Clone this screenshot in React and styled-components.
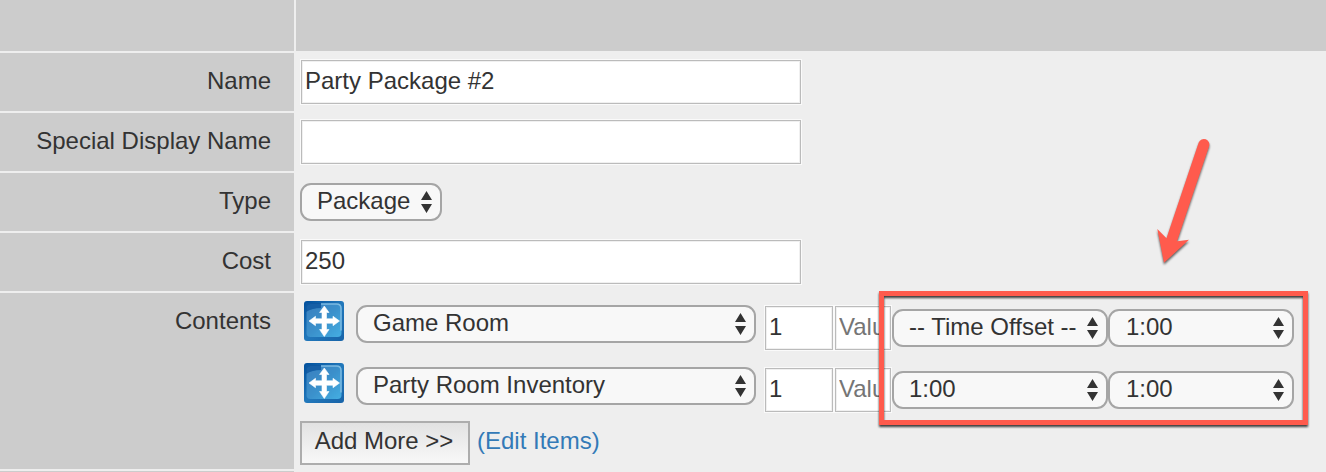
import React from 'react';
import styled, { createGlobalStyle } from 'styled-components';

const GlobalStyle = createGlobalStyle`
  * {
    box-sizing: border-box;
  }

  body {
    margin: 0;
    background: #eee;
    overflow: hidden;
  }

  body, input, select, button {
    font-family: 'Liberation Sans', Arial, sans-serif;
    font-size: 24px;
    line-height: 28px;
    color: #333;
  }
`;

const Page = styled.div`
  position: relative;
  width: 1326px;
  height: 472px;
  overflow: hidden;
`;

const Form = styled.div`
  display: grid;
  grid-template-columns: 294px 1fr;
  grid-template-rows: 51px repeat(4, 58px) 176px 58px;
  gap: 2px;
  background: #eee;
`;

const Heading = styled.div`
  background: #ccc;
`;

const Label = styled.div`
  padding: 14px 23px 0 0;
  background: #ccc;
  text-align: right;
`;

const Cell = styled.div`
  display: flex;
  align-items: flex-start;
  padding: ${({ $top }) => $top || 7}px 0 0 5px;
`;

const Input = styled.input`
  flex: none;
  width: ${({ $width }) => $width || 500}px;
  height: 44px;
  padding: 0 6px 2px 3px;
  border: 1px solid #bbb;
  border-radius: 0;
  outline: 1px solid #fafafa;
  background: #fff;
  box-shadow: inset 0 0 0 1px #f0f0f0;

  &::placeholder {
    color: #757575;
    opacity: 1;
  }
`;

const SelectBox = styled.div`
  display: flex;
  flex: none;
  align-items: center;
  width: ${({ $width }) => $width}px;
  height: 38px;
  padding-right: 8px;
  border: 2px solid #a5a5a5;
  border-radius: 11px;
  background: #f8f8f8;

  select {
    flex: 1;
    min-width: 0;
    height: 34px;
    padding: 0 0 2px 15px;
    border: 0;
    outline: 0;
    appearance: none;
    background: transparent;
  }

  svg {
    flex: none;
    fill: #333;
  }
`;

const TypeCell = styled(Cell)`
  padding: 10px 0 0 4px;
`;

const Contents = styled.div`
  display: flex;
  flex-direction: column;
  padding: 8px 0 0 4px;
`;

const Item = styled.div`
  display: flex;
  align-items: flex-start;
  height: 62px;
  padding-left: 4px;

  > svg {
    flex: none;
    margin-right: 12px;
  }
`;

const ItemSelect = styled.div`
  padding-top: 4px;
  margin-right: 9px;
`;

const ItemInputs = styled.div`
  display: flex;
  gap: 2px;
  padding-top: 5px;
  margin-right: 1px;
`;

const Times = styled.div`
  display: flex;
  padding-top: 8px;

  div + div select {
    padding-left: 16px;
  }
`;

const Actions = styled.div`
  display: flex;
  align-items: flex-start;
  gap: 7px;
  margin-top: -4px;

  a {
    padding-top: 6px;
    color: #337ab7;
    text-decoration: none;
  }
`;

const Button = styled.button`
  width: 170px;
  height: 44px;
  padding: 0 2px 4px 0;
  border: 2px solid #adadad;
  background: linear-gradient(#e2e2e2, #f8f8f8);
  white-space: nowrap;
`;

const Highlight = styled.div`
  position: absolute;
  top: 291px;
  left: 879px;
  width: 429px;
  height: 134px;
  border: 5px solid #ff5b4d;
  filter: drop-shadow(0 2px 1px rgba(0, 0, 0, 0.75));
  pointer-events: none;
`;

const Pointer = styled.svg`
  position: absolute;
  top: 130px;
  left: 1150px;
  filter: drop-shadow(0 2px 1px rgba(0, 0, 0, 0.6));
`;

function Select({ width, value }) {
  return (
    <SelectBox $width={width}>
      <select defaultValue={value}>
        <option>{value}</option>
      </select>
      <svg width="11" height="22" viewBox="0 0 11 22">
        <path d="M5.5 0 11 9H0ZM0 13h11L5.5 22Z" />
      </svg>
    </SelectBox>
  );
}

function MoveIcon({ id }) {
  return (
    <svg width="40" height="40" viewBox="0 0 40 40">
      <defs>
        <linearGradient id={`${id}-base`} x1="0" y1="0" x2="1" y2="1">
          <stop offset="0" stopColor="#004f9c" />
          <stop offset="0.5" stopColor="#2278bb" />
          <stop offset="1" stopColor="#1763a8" />
        </linearGradient>
        <linearGradient id={`${id}-face`} x1="0" y1="0" x2="1" y2="1">
          <stop offset="0" stopColor="#3a7fbe" />
          <stop offset="0.5" stopColor="#3a90cb" />
          <stop offset="1" stopColor="#45aee2" />
        </linearGradient>
        <filter id={`${id}-soft`}>
          <feGaussianBlur stdDeviation="0.6" />
        </filter>
      </defs>
      <rect width="40" height="40" rx="3" fill={`url(#${id}-base)`} />
      <g filter={`url(#${id}-soft)`}>
        <rect x="2.5" y="3" width="35" height="33" rx="4" fill={`url(#${id}-face)`} />
        <path d="M17 3h15.500q4.500 0 4.500 4.500v22" fill="none" stroke="#7dbbe2" strokeWidth="1.500" />
        <path d="M2 2h15v5Q8 7 2 11Z" fill="#0a559f" opacity="0.8" />
        <path
          d="M20.300 5 25 11.500h-2.500v6.300h6.500V15.300L35.500 20 29 24.700v-2.500h-6.500v6.300H25L20.300 35.500l-4.700-7H18v-6.300h-6.500v2.500L5 20l6.500-4.700v2.500H18v-6.300h-2.400Z"
          fill="#fff"
          stroke="#fff"
          strokeWidth="0.6"
        />
      </g>
    </svg>
  );
}

const items = [
  { id: 'game', name: 'Game Room', offset: '-- Time Offset --', duration: '1:00' },
  { id: 'party', name: 'Party Room Inventory', offset: '1:00', duration: '1:00' },
];

export default function App() {
  return (
    <Page>
      <GlobalStyle />
      <Form>
        <Heading />
        <Heading />
        <Label>Name</Label>
        <Cell>
          <Input defaultValue="Party Package #2" />
        </Cell>
        <Label>Special Display Name</Label>
        <Cell>
          <Input />
        </Cell>
        <Label>Type</Label>
        <TypeCell>
          <Select width={142} value="Package" />
        </TypeCell>
        <Label>Cost</Label>
        <Cell>
          <Input defaultValue="250" />
        </Cell>
        <Label>Contents</Label>
        <Contents>
          {items.map((item) => (
            <Item key={item.id}>
              <MoveIcon id={item.id} />
              <ItemSelect>
                <Select width={400} value={item.name} />
              </ItemSelect>
              <ItemInputs>
                <Input $width={68} defaultValue="1" />
                <Input $width={56} placeholder="Value" />
              </ItemInputs>
              <Times>
                <Select width={216} value={item.offset} />
                <Select width={186} value={item.duration} />
              </Times>
            </Item>
          ))}
          <Actions>
            <Button type="button">Add More &gt;&gt;</Button>
            <a href="#items">(Edit Items)</a>
          </Actions>
        </Contents>
        <Label />
      </Form>
      <Highlight />
      <Pointer width="70" height="145" viewBox="1150 130 70 145">
        <path
          d="M1198.700 142.500A5.500 5.500 0 0 1 1209 146.500L1177 241.300 1189 239.800 1164 262.800 1157.300 229 1166.500 238.300Z"
          fill="#ff5b4d"
        />
      </Pointer>
    </Page>
  );
}
